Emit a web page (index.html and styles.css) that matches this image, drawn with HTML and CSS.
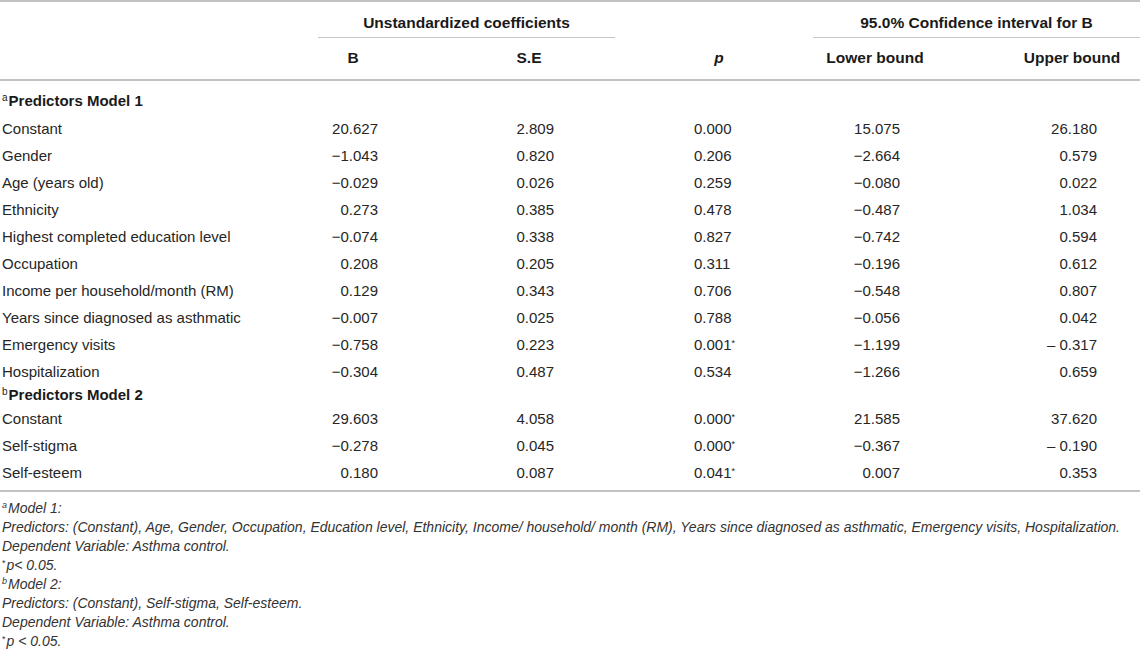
FILE: index.html
```html
<!DOCTYPE html>
<html>
<head>
<meta charset="utf-8">
<link rel="stylesheet" href="styles.css">
</head>
<body>
<table class="tbl">
  <colgroup>
    <col class="c-label"><col class="c-b"><col class="c-se"><col class="c-p"><col class="c-lo"><col class="c-up">
  </colgroup>
  <thead>
    <tr class="h1">
      <th></th>
      <th colspan="2"><div class="span-in">Unstandardized coefficients</div></th>
      <th></th>
      <th colspan="2"><div class="span-in">95.0% Confidence interval for B</div></th>
    </tr>
    <tr class="h2">
      <th></th>
      <th class="b"><span class="hbox">B</span></th>
      <th class="se"><span class="hbox">S.E</span></th>
      <th class="p"><span class="hbox"><i>p</i></span></th>
      <th class="lo"><span class="hbox">Lower bound</span></th>
      <th class="up"><span class="hbox">Upper bound</span></th>
    </tr>
  </thead>
  <tbody>
    <tr class="sec sec-first"><td colspan="6"><sup class="mark">a</sup>Predictors Model 1</td></tr>
    <tr><td class="lab">Constant</td><td class="b"><span class="num">20.627</span></td><td class="se"><span class="num">2.809</span></td><td class="p"><span class="pv">0.000</span></td><td class="lo"><span class="num">15.075</span></td><td class="up"><span class="num">26.180</span></td></tr>
    <tr><td class="lab">Gender</td><td class="b"><span class="num">−1.043</span></td><td class="se"><span class="num">0.820</span></td><td class="p"><span class="pv">0.206</span></td><td class="lo"><span class="num">−2.664</span></td><td class="up"><span class="num">0.579</span></td></tr>
    <tr><td class="lab">Age (years old)</td><td class="b"><span class="num">−0.029</span></td><td class="se"><span class="num">0.026</span></td><td class="p"><span class="pv">0.259</span></td><td class="lo"><span class="num">−0.080</span></td><td class="up"><span class="num">0.022</span></td></tr>
    <tr><td class="lab">Ethnicity</td><td class="b"><span class="num">0.273</span></td><td class="se"><span class="num">0.385</span></td><td class="p"><span class="pv">0.478</span></td><td class="lo"><span class="num">−0.487</span></td><td class="up"><span class="num">1.034</span></td></tr>
    <tr><td class="lab">Highest completed education level</td><td class="b"><span class="num">−0.074</span></td><td class="se"><span class="num">0.338</span></td><td class="p"><span class="pv">0.827</span></td><td class="lo"><span class="num">−0.742</span></td><td class="up"><span class="num">0.594</span></td></tr>
    <tr><td class="lab">Occupation</td><td class="b"><span class="num">0.208</span></td><td class="se"><span class="num">0.205</span></td><td class="p"><span class="pv">0.311</span></td><td class="lo"><span class="num">−0.196</span></td><td class="up"><span class="num">0.612</span></td></tr>
    <tr><td class="lab">Income per household/month (RM)</td><td class="b"><span class="num">0.129</span></td><td class="se"><span class="num">0.343</span></td><td class="p"><span class="pv">0.706</span></td><td class="lo"><span class="num">−0.548</span></td><td class="up"><span class="num">0.807</span></td></tr>
    <tr><td class="lab">Years since diagnosed as asthmatic</td><td class="b"><span class="num">−0.007</span></td><td class="se"><span class="num">0.025</span></td><td class="p"><span class="pv">0.788</span></td><td class="lo"><span class="num">−0.056</span></td><td class="up"><span class="num">0.042</span></td></tr>
    <tr><td class="lab">Emergency visits</td><td class="b"><span class="num">−0.758</span></td><td class="se"><span class="num">0.223</span></td><td class="p"><span class="pv">0.001<sup class="ast">*</sup></span></td><td class="lo"><span class="num">−1.199</span></td><td class="up"><span class="num">– 0.317</span></td></tr>
    <tr><td class="lab">Hospitalization</td><td class="b"><span class="num">−0.304</span></td><td class="se"><span class="num">0.487</span></td><td class="p"><span class="pv">0.534</span></td><td class="lo"><span class="num">−1.266</span></td><td class="up"><span class="num">0.659</span></td></tr>
    <tr class="sec sec-second"><td colspan="6"><sup class="mark">b</sup>Predictors Model 2</td></tr>
    <tr><td class="lab">Constant</td><td class="b"><span class="num">29.603</span></td><td class="se"><span class="num">4.058</span></td><td class="p"><span class="pv">0.000<sup class="ast">*</sup></span></td><td class="lo"><span class="num">21.585</span></td><td class="up"><span class="num">37.620</span></td></tr>
    <tr><td class="lab">Self-stigma</td><td class="b"><span class="num">−0.278</span></td><td class="se"><span class="num">0.045</span></td><td class="p"><span class="pv">0.000<sup class="ast">*</sup></span></td><td class="lo"><span class="num">−0.367</span></td><td class="up"><span class="num">– 0.190</span></td></tr>
    <tr class="last"><td class="lab">Self-esteem</td><td class="b"><span class="num">0.180</span></td><td class="se"><span class="num">0.087</span></td><td class="p"><span class="pv">0.041<sup class="ast">*</sup></span></td><td class="lo"><span class="num">0.007</span></td><td class="up"><span class="num">0.353</span></td></tr>
  </tbody>
</table>
<div class="notes">
  <p><sup class="fmark">a</sup>Model 1:</p>
  <p>Predictors: (Constant), Age, Gender, Occupation, Education level, Ethnicity, Income/ household/ month (RM), Years since diagnosed as asthmatic, Emergency visits, Hospitalization.</p>
  <p>Dependent Variable: Asthma control.</p>
  <p><sup class="fast">*</sup>p&lt; 0.05.</p>
  <p><sup class="fmark">b</sup>Model 2:</p>
  <p>Predictors: (Constant), Self-stigma, Self-esteem.</p>
  <p>Dependent Variable: Asthma control.</p>
  <p><sup class="fast">*</sup>p &lt; 0.05.</p>
</div>
</body>
</html>
```

FILE: styles.css
```css
html, body {
  margin: 0;
  padding: 0;
  background: #ffffff;
}
body {
  font-family: "Liberation Sans", Arial, Helvetica, sans-serif;
  color: #262626;
  width: 1140px;
}
.tbl {
  width: 1140px;
  table-layout: fixed;
  border-collapse: separate;
  border-spacing: 0;
  border-top: 2px solid #c2c2c2;
  border-bottom: 2px solid #c2c2c2;
  font-size: 15px;
}
.c-label { width: 318px; }
.c-b { width: 150px; }
.c-se { width: 147px; }
.c-p { width: 198px; }
.c-lo { width: 160px; }
.c-up { width: 167px; }

th, td {
  padding: 0;
  text-align: left;
  vertical-align: middle;
  white-space: nowrap;
}
th {
  font-weight: bold;
  color: #1a1a1a;
  font-size: 15.5px;
}
.h1 th {
  padding-top: 10px;
  line-height: 22px;
}
.span-in {
  text-align: center;
  padding-bottom: 3px;
  border-bottom: 1px solid #c6c6c6;
}
.h2 th {
  padding-top: 9px;
  padding-bottom: 10px;
  line-height: 22px;
  border-bottom: 2px solid #c2c2c2;
}
.hbox {
  display: inline-flex;
  justify-content: center;
  width: 50px;
}
.num {
  display: inline-block;
  width: 50px;
  text-align: right;
}
.pv {
  display: inline-block;
  width: 50px;
  text-align: left;
}
.b { padding-left: 10px; }
.se { padding-left: 36px; }
.p { padding-left: 79px; }
.lo { padding-left: 37px; }
.up { padding-left: 74px; }

tbody td {
  line-height: 27px;
}
.lab {
  padding-left: 2px;
}
.sec td {
  font-weight: bold;
  color: #1a1a1a;
  line-height: 22px;
  padding-left: 2px;
}
.sec-first td {
  padding-top: 9px;
  padding-bottom: 3px;
}
.sec-second td {
  line-height: 20px;
}
.last td {
  padding-bottom: 4px;
}
.mark {
  font-weight: normal;
  font-size: 10px;
  line-height: 0;
  vertical-align: 5px;
  margin-right: 1px;
}
.ast {
  font-size: 9px;
  line-height: 0;
  vertical-align: 4px;
  display: inline-block;
  width: 0;
}

.notes {
  margin-top: 7px;
  font-size: 14px;
  font-style: italic;
  line-height: 19px;
  color: #333333;
  padding-left: 2px;
}
.notes p {
  margin: 0;
  white-space: nowrap;
}
.fmark {
  font-size: 9px;
  line-height: 0;
  vertical-align: 5px;
  margin-right: 1px;
}
.fast {
  font-style: normal;
  font-size: 9px;
  line-height: 0;
  vertical-align: 4px;
  margin-right: 1px;
}
```
